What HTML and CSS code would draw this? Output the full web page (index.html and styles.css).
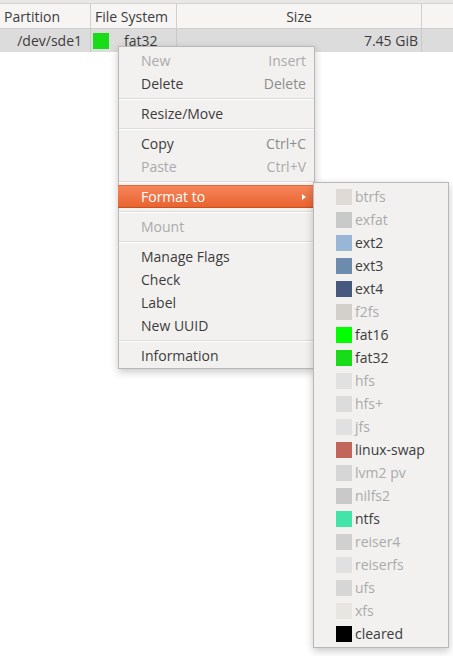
FILE: index.html
```html
<!DOCTYPE html>
<html>
<head>
<meta charset="utf-8">
<link rel="stylesheet" href="styles.css">
</head>
<body>
<div class="app">
  <div class="topstrip"></div>
  <div class="header">
    <div class="col c1">Partition</div>
    <div class="col c2">File System</div>
    <div class="col c3 center">Size</div>
    <div class="col c4"></div>
  </div>
  <div class="row">
    <div class="col c1 right">/dev/sde1</div>
    <div class="col c2 fs"><span class="sw fat32"></span><span>fat32</span></div>
    <div class="col c3 right">7.45 GiB</div>
    <div class="col c4"></div>
  </div>

  <div class="menu main">
    <div class="item dis"><span>New</span><span class="acc">Insert</span></div>
    <div class="item"><span>Delete</span><span class="acc">Delete</span></div>
    <div class="sep"></div>
    <div class="item"><span>Resize/Move</span></div>
    <div class="sep"></div>
    <div class="item"><span>Copy</span><span class="acc">Ctrl+C</span></div>
    <div class="item dis"><span>Paste</span><span class="acc">Ctrl+V</span></div>
    <div class="sep"></div>
    <div class="item hl"><span>Format to</span><span class="arrow"></span></div>
    <div class="sep"></div>
    <div class="item dis"><span>Mount</span></div>
    <div class="sep"></div>
    <div class="item"><span>Manage Flags</span></div>
    <div class="item"><span>Check</span></div>
    <div class="item"><span>Label</span></div>
    <div class="item"><span>New UUID</span></div>
    <div class="sep"></div>
    <div class="item"><span>Information</span></div>
  </div>

  <div class="menu sub">
    <div class="sitem dis"><span class="sw" style="background:#dedad6"></span>btrfs</div>
    <div class="sitem dis"><span class="sw" style="background:#c8c9c9"></span>exfat</div>
    <div class="sitem"><span class="sw" style="background:#9ab6d6"></span>ext2</div>
    <div class="sitem"><span class="sw" style="background:#6d8bad"></span>ext3</div>
    <div class="sitem"><span class="sw" style="background:#48597f"></span>ext4</div>
    <div class="sitem dis"><span class="sw" style="background:#d3cfcb"></span>f2fs</div>
    <div class="sitem"><span class="sw" style="background:#00ff00"></span>fat16</div>
    <div class="sitem"><span class="sw" style="background:#18dc18"></span>fat32</div>
    <div class="sitem dis"><span class="sw" style="background:#e1e1e1"></span>hfs</div>
    <div class="sitem dis"><span class="sw" style="background:#dcdcdc"></span>hfs+</div>
    <div class="sitem dis"><span class="sw" style="background:#e0e0e0"></span>jfs</div>
    <div class="sitem"><span class="sw" style="background:#c2655a"></span>linux-swap</div>
    <div class="sitem dis"><span class="sw" style="background:#d6d6d6"></span>lvm2 pv</div>
    <div class="sitem dis"><span class="sw" style="background:#c9c9c9"></span>nilfs2</div>
    <div class="sitem"><span class="sw" style="background:#42e4aa"></span>ntfs</div>
    <div class="sitem dis"><span class="sw" style="background:#d0d0d0"></span>reiser4</div>
    <div class="sitem dis"><span class="sw" style="background:#e0e0e0"></span>reiserfs</div>
    <div class="sitem dis"><span class="sw" style="background:#d6d6d6"></span>ufs</div>
    <div class="sitem dis"><span class="sw" style="background:#e7e6e1"></span>xfs</div>
    <div class="sitem"><span class="sw" style="background:#000000"></span>cleared</div>
  </div>
</div>
</body>
</html>
```

FILE: styles.css
```css
html, body {
  margin: 0;
  padding: 0;
  background: #ffffff;
}
body {
  font-family: "Open Sans", "DejaVu Sans", sans-serif;
  font-size: 14px;
  color: #3c3c3c;
}
.app {
  position: relative;
  width: 453px;
  height: 656px;
  overflow: hidden;
}
.topstrip {
  height: 3px;
  background: #e8e7e6;
  border-bottom: 1px solid #d4d3d2;
}
.header, .row {
  display: flex;
  height: 24px;
}
.header {
  background: #f6f5f4;
  border-bottom: 1px solid #cfcecd;
}
.row {
  height: 23px;
  background: #dcdcdc;
}
.col {
  display: flex;
  align-items: center;
  box-sizing: border-box;
  padding: 0 4px;
  border-right: 1px solid #d0cfce;
  white-space: nowrap;
}
.row .col { border-right-color: #c9c9c9; }
.c1 { width: 91px; }
.c2 { width: 86px; }
.c3 { width: 245px; }
.c4 { flex: 1; border-right: none; }
.center { justify-content: center; }
.right { justify-content: flex-end; padding-right: 8px; }
.row .c3.right { padding-right: 3px; }
.fs { gap: 15px; padding-left: 2px; }
.sw {
  display: inline-block;
  width: 16px;
  height: 16px;
  flex: none;
}
.fat32 { background: #18dc18; }

.menu {
  position: absolute;
  background: #f2f1f0;
  border: 1px solid #b9b8b6;
  box-shadow: 0 3px 8px rgba(0, 0, 0, 0.22);
  box-sizing: border-box;
}
.main {
  left: 118px;
  top: 46px;
  width: 197px;
  padding: 2px 0 1px;
}
.item {
  height: 23px;
  display: flex;
  align-items: center;
  justify-content: space-between;
  padding: 0 8px 0 22px;
  white-space: nowrap;
}
.acc { color: #8c8c8c; }
.dis, .dis .acc { color: #ababab; }
.sep {
  height: 7px;
  display: flex;
  align-items: center;
}
.sep::before {
  content: "";
  display: block;
  width: 100%;
  height: 1px;
  background: #dcdbd9;
  border-bottom: 1px solid #ffffff;
}
.item.hl {
  background: linear-gradient(#f6855a, #e9632f);
  color: #ffffff;
  margin: 0 -1px;
  padding-left: 23px;
  border-top: 1px solid #e3683c;
  border-bottom: 1px solid #c9501f;
  box-sizing: content-box;
  height: 21px;
}
.arrow {
  width: 0;
  height: 0;
  border-top: 3px solid transparent;
  border-bottom: 3px solid transparent;
  border-left: 4px solid #ffffff;
  margin-right: 1px;
}
.sub {
  left: 313px;
  top: 182px;
  width: 136px;
  padding: 2px 0 2px;
}
.sitem {
  height: 23px;
  display: flex;
  align-items: center;
  gap: 3px;
  padding-left: 22px;
  white-space: nowrap;
}
```
